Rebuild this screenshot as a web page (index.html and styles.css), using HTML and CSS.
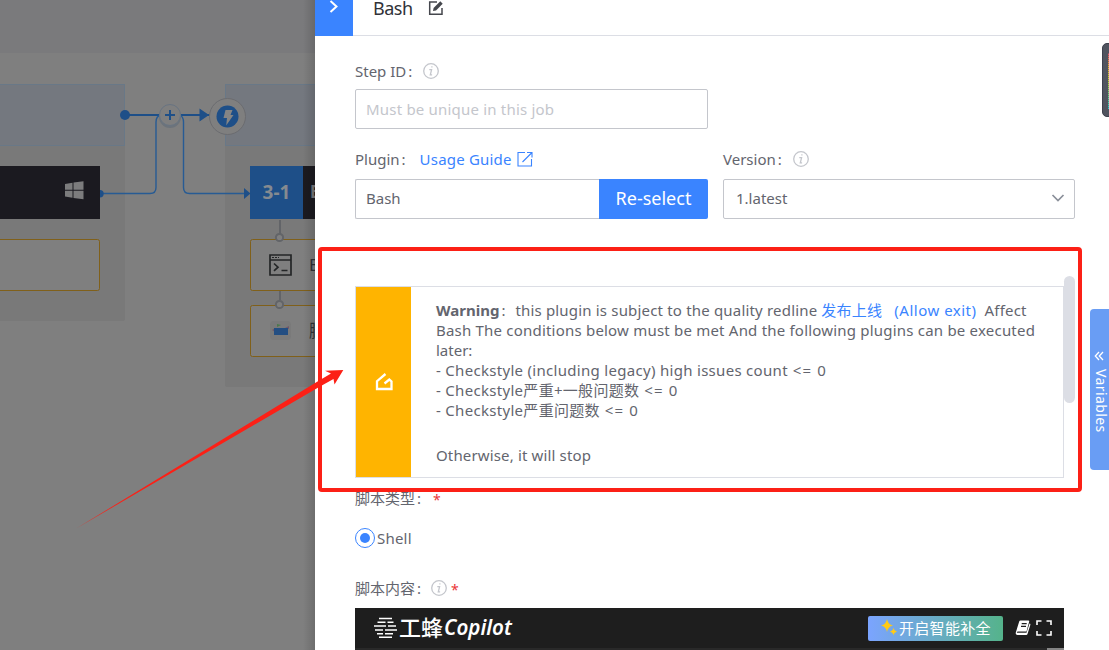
FILE: index.html
```html
<!DOCTYPE html>
<html lang="en">
<head>
<meta charset="utf-8">
<title>Bash</title>
<link rel="stylesheet" href="styles.css">
</head>
<body>
<div class="app">
  <div class="canvas">
    <div class="canvas-top"></div>
    <svg class="graph" width="315" height="650" viewBox="0 0 315 650">
      <rect class="stage" x="-10" y="84" width="135" height="237" rx="2"/>
      <rect class="stage" x="225" y="84" width="120" height="303" rx="2"/>
      <rect class="stage-head" x="-10" y="84.5" width="134.5" height="61"/>
      <rect class="stage-head" x="225.500" y="84.500" width="120" height="61"/>
      <rect class="job" x="0" y="166" width="100" height="53"/>
      <rect class="job" x="303" y="166" width="30" height="53"/>
      <rect class="job-no" x="250" y="166" width="53" height="53"/>
      <rect class="task" x="-10" y="239.500" width="109.500" height="51" rx="2"/>
      <rect class="task" x="250.500" y="239.500" width="90" height="51" rx="2"/>
      <rect class="task" x="250.500" y="305.500" width="90" height="51" rx="2"/>
      <g class="joint">
        <path d="M280 220v14M280 291v9"/>
        <circle cx="279.500" cy="237.500" r="3.600"/>
        <circle cx="279.500" cy="304.500" r="3.600"/>
      </g>
      <path class="wire wide" d="M125 115H160M181 115H211"/>
      <path class="wire" d="M102 193.500H150Q156 193.500 156 187.500V122Q156 116 161 115M180 115Q183.500 117 183.500 122V187.500Q183.500 193.500 189.500 193.500H245"/>
      <g class="blue">
        <circle cx="125" cy="115" r="5"/>
        <path d="M100 190a3.700 3.700 0 0 1 0 7.400zM199.500 108.500L209 115L199.500 121.500zM244 188l6.500 5.500l-6.500 5.500z"/>
      </g>
      <circle class="add-shadow" cx="170" cy="117" r="11"/>
      <circle class="add" cx="170" cy="115" r="10.500"/>
      <path class="plus" d="M165 115h10M170 110v10"/>
      <circle class="trigger" cx="227.500" cy="116.500" r="18"/>
      <circle class="blue" cx="227.500" cy="116.500" r="11"/>
      <path class="bolt" d="M225.500 110h7l-2 5h3l-7.300 10.500l.8-7.500h-3.500z"/>
      <path class="windows" d="M65 184l7.500-1.200v7H65zM73.500 182.600l10-1.400v8.600h-10zM65 190.800h7.500v7L65 196.600zM73.500 190.800h10v8.400l-10-1.300z"/>
      <g class="terminal">
        <path d="M270 255h21v20h-21zM270 260h21"/>
        <path d="M274 263.500l4 3.700l-4 3.700M281.500 270.500h6"/>
        <path class="dots" d="M272 257.500h7"/>
      </g>
      <rect class="plug-bg" x="270" y="321" width="21" height="19" rx="4"/>
      <path class="plug-ear" d="M272 330l3-2v4zM285 328l4-2v3z"/>
      <path class="plug-top" d="M277 324l4 1l-4 2z"/>
      <rect class="plug" x="274" y="328" width="14" height="7"/>
    </svg>
    <div class="num">3-1</div>
    <div class="peek peek-job">B</div>
    <div class="peek peek-one">B</div>
    <div class="peek peek-two">脚</div>
  </div>

  <main class="drawer">
    <header class="head">
      <div class="close"><svg width="38" height="36" viewBox="0 0 38 36"><path d="M15.500 1l6 5.500l-6 5.500"/></svg></div>
      <h1>Bash</h1>
      <svg class="edit" width="16" height="16" viewBox="0 0 16 16"><path d="M9 2H1.700V14.300H14V8"/><path class="pen" d="M5 11l.6-3L12.300 1.300l2.400 2.400L8 10.400z"/></svg>
    </header>
    <div class="form">
      <div class="label step"><span>Step ID</span><i class="colon">:</i><svg class="info"><use href="#info"/></svg></div>
      <div class="input id"><span>Must be unique in this job</span></div>
      <div class="cols">
        <section class="plugin">
          <div class="label"><span>Plugin</span><i class="colon">:</i><a class="guide">Usage Guide</a><svg class="ext" width="16" height="16" viewBox="0 0 16 16"><path d="M8 1.500H1V15H14.500V8M10 1.500h5v5M15 1.500L5.500 11"/></svg></div>
          <div class="join"><div class="input">Bash</div><button class="reselect">Re-select</button></div>
        </section>
        <section class="version">
          <div class="label"><span>Version</span><i class="colon">:</i><svg class="info"><use href="#info"/></svg></div>
          <div class="input select"><span>1.latest</span><svg width="14" height="10" viewBox="0 0 14 10"><path d="M1.500 2l5.500 5.500L12.500 2"/></svg></div>
        </section>
      </div>
      <div class="scroll">
        <div class="notice">
          <div class="badge"><svg width="20" height="20" viewBox="0 0 20 20"><path d="M11.500 2L3 9.200V17H17.500V9.500L15.300 7.500L10.500 11.500"/></svg></div>
          <div class="copy">
            <p class="l1"><b>Warning</b><span class="wide-colon">:</span><span class="l1-a">this plugin is subject to the quality redline</span><a class="rule">发布上线</a><a class="allow">(Allow exit)</a><span class="affect">Affect</span></p>
            <p class="l2">Bash The conditions below must be met And the following plugins can be executed</p>
            <p>later:</p>
            <p class="check">- Checkstyle (including legacy) high issues count<span class="limit"> &lt;= 0</span></p>
            <p class="check">- Checkstyle严重+一般问题数<span class="limit"> &lt;= 0</span></p>
            <p class="check">- Checkstyle严重问题数<span class="limit"> &lt;= 0</span></p>
            <p class="stop">Otherwise, it will stop</p>
          </div>
        </div>
        <div class="thumb"></div>
      </div>
      <div class="label type">脚本类型<i class="colon">:</i><em>*</em></div>
      <div class="radio"><span class="ring"></span><span class="shell">Shell</span></div>
      <div class="label content">脚本内容<i class="colon">:</i><svg class="info"><use href="#info"/></svg><em>*</em></div>
      <div class="editor">
        <div class="bar">
          <svg class="bee" width="23" height="22" viewBox="0 0 23 22"><path d="M5 1.500h13M3.500 5.300h8M13.500 5.300h6M0 9.100h12M14 9.100h8M1 12.900h8M11 12.900h12M3 16.700h6M11 16.700h8M5 20.300h13"/></svg>
          <span class="brand-cn">工蜂</span><span class="brand-en">Copilot</span>
          <div class="smart"><svg width="17" height="18" viewBox="0 0 17 18"><path d="M6 0Q7 5.500 12 6.500Q7 7.500 6 13Q5 7.500 0 6.500Q5 5.500 6 0zM12.500 9Q13 12 16 12.700Q13 13.300 12.500 16.500Q12 13.300 9 12.700Q12 12 12.500 9z"/></svg><span>开启智能补全</span></div>
          <svg class="book" width="17" height="18" viewBox="0 0 17 18"><path class="cover" d="M5.500 1.500h8q1 0 .7 1L11.500 12.500H3q-1.500 0-1 1.200h9.500L14.500 4.500q1.200.3.800 1.500L12.500 15q-.3 1-1.300 1H2.500q-2.300-.3-1.700-2.500L4.200 2.500q.3-1 1.300-1z"/><path class="lines" d="M6.700 4.700h5M6 7.300h5"/></svg>
          <svg class="full" width="16" height="16" viewBox="0 0 16 16"><path d="M1 5V1h4.500M10.500 1H15v4M15 11v4h-4.500M5.500 15H1v-4"/></svg>
        </div>
        <div class="code"><span></span></div>
      </div>
    </div>
  </main>

  <div class="variables"><svg width="10" height="10" viewBox="0 0 10 10"><path d="M5 1L1.300 5L5 9M9 1L5.300 5L9 9"/></svg><span>Variables</span></div>
  <div class="meter"><span></span></div>
  <svg class="markup" width="1109" height="650" viewBox="0 0 1109 650">
    <rect x="320" y="249" width="760" height="241" rx="2"/>
    <path d="M77 528L320 380L331 373.500L325 370.700L343.300 370L334.500 384.500L333.500 379L320 386.500z"/>
  </svg>
</div>
<svg class="defs"><symbol id="info" viewBox="0 0 16 16"><circle cx="8" cy="8" r="7.300"/><path d="M6.300 6.700h2.300L7.300 11.800h1.800"/><path class="dot" d="M8.300 3.800h1.200"/></symbol></svg>
</body>
</html>
```
FILE: styles.css
```css
* { box-sizing: border-box; }
body { margin: 0; font: 15px/20px "Noto Sans", "Noto Sans CJK SC", sans-serif; color: #63656e; }
svg { display: block; flex: none; fill: none; }
p, h1 { margin: 0; }
.defs { position: absolute; width: 0; height: 0; }
.app { position: relative; width: 1109px; height: 650px; overflow: hidden; background: #fff; }

.canvas { position: absolute; inset: 0 auto 0 0; width: 315px; background: #7f7f7f; overflow: hidden; }
.canvas::after { content: ""; position: absolute; inset: 0 0 0 auto; width: 12px; background: linear-gradient(90deg, transparent, rgba(0,0,0,.14)); }
.canvas-top { height: 53px; background: #7a7a7c; }
.graph { position: absolute; left: 0; top: 0; }
.stage { fill: #797979; }
.stage-head { fill: #74787f; stroke: #697887; }
.job { fill: #1b1a20; }
.job-no, .blue { fill: #1e4f88; }
.task { fill: #7f7f7f; stroke: #80601a; }
.joint { stroke: #626468; stroke-width: 2; }
.joint circle { fill: #7f7f7f; }
.wire { stroke: #275b94; stroke-width: 1.400; }
.wide { stroke: #1e4f88; stroke-width: 2; }
.add { fill: #7f7f7f; stroke: #687482; }
.add-shadow { fill: #6c737b; }
.plus { stroke: #1e4f88; stroke-width: 2; }
.trigger { fill: #7f7f7f; stroke: #6b6c70; }
.bolt { fill: #858585; }
.windows { fill: #7c7c7d; }
.terminal { stroke: #242627; stroke-width: 1.700; }
.terminal .dots { stroke-dasharray: 2 1; stroke-width: 1; }
.plug-bg { fill: #7a7a7a; }
.plug { fill: #234e82; }
.plug-ear { fill: #70586a; }
.plug-top { fill: #4c794c; }
.num { position: absolute; left: 250px; top: 166px; width: 53px; text-align: center; font: bold 19px/53px "Noto Sans", sans-serif; color: #858a90; }
.peek { position: absolute; left: 309px; font-size: 17px; line-height: 24px; color: #303238; }
.peek-job { left: 310px; top: 180px; font-weight: bold; color: #77777a; }
.peek-one { top: 253px; }
.peek-two { top: 319px; }

.drawer { position: absolute; left: 315px; top: 0; right: 0; bottom: 0; background: #fff; }
.head { display: flex; height: 36px; border-bottom: 1px solid #dcdee5; }
.close { width: 38px; height: 36px; background: #3a84ff; }
.close path { stroke: #fff; stroke-width: 2; }
.head h1 { width: 55px; margin: -4px 0 0 20px; font: 18px/24px "Noto Sans", sans-serif; letter-spacing: -.5px; color: #313238; }
.edit { stroke: #45474d; stroke-width: 1.500; }
.edit .pen { fill: #45474d; stroke: none; }
.form { padding: 0 34px 0 40px; }
.label { display: flex; align-items: center; height: 20px; }
.colon { width: 15px; padding-left: 2px; font-style: normal; }
.step { margin-top: 25px; }
.info { width: 16px; height: 16px; margin-left: 2px; stroke: #c4c6cc; stroke-width: 1.300; }
.input { display: flex; align-items: center; height: 40px; padding: 0 10px 2px; border: 1px solid #c4c6cc; border-radius: 2px; }
.id { width: 353px; margin-top: 8px; padding-bottom: 0; letter-spacing: .2px; color: #c4c6cc; }
.cols { display: grid; grid-template-columns: 353px 352px; gap: 15px; margin-top: 20px; }
.join, .version .input { margin-top: 10px; }
.join { display: flex; }
.join .input { width: 244px; border-right: 0; border-radius: 2px 0 0 2px; }
.reselect { flex: 1; height: 40px; padding: 0 0 2px; border: 0; border-radius: 0 2px 2px 0; background: #3a84ff; color: #fff; font: 18px/38px "Noto Sans", sans-serif; }
a { color: #3a84ff; }
.guide { margin-left: 5px; letter-spacing: .2px; }
.ext { margin-left: 5px; stroke: #3a84ff; stroke-width: 1.100; }
.select { justify-content: space-between; padding: 0 9px 2px 12px; }
.select path { stroke: #8a8f99; stroke-width: 1.700; }
.scroll { display: flex; align-items: flex-start; height: 202px; margin-top: 57px; }
.notice { display: flex; width: 709px; height: 192px; margin-top: 10px; border: 1px solid #dcdee5; }
.badge { display: grid; place-items: center; width: 55px; background: #ffb400; }
.badge path { stroke: #fff; stroke-width: 2.300; }
.copy { padding: 13px 0 0 25px; white-space: nowrap; }
.copy p { height: 20px; }
.l1 { display: flex; }
.wide-colon { width: 15px; padding-left: 2px; margin-right: 1px; }
.l1-a { letter-spacing: .18px; }
.rule { margin-left: 4px; letter-spacing: .25px; }
.allow { margin: 0 8px 0 12px; letter-spacing: .5px; }
.affect { letter-spacing: .2px; }
.l2 { letter-spacing: .205px; }
.check { letter-spacing: .3px; }
.limit { letter-spacing: 1.1px; }
.copy .stop { margin-top: 25px; letter-spacing: .15px; }
.thumb { width: 11px; height: 127px; border-radius: 6px; background: #dcdee5; }
.type { margin-top: 10px; }
em { margin-left: 3px; font-style: normal; font-size: 14px; line-height: 22px; color: #ea3636; padding-top: 3px; }
.radio { display: flex; align-items: center; height: 20px; margin-top: 20px; }
.ring { display: grid; place-items: center; width: 20px; height: 20px; margin-right: 2px; border: 1px solid #3a84ff; border-radius: 50%; }
.ring::after { content: ""; width: 10px; height: 10px; border-radius: 50%; background: #3a84ff; }
.shell { letter-spacing: .2px; }
.content { margin-top: 30px; }
.content .info { margin-left: 1px; }
.content em { margin-left: 4px; }
.editor { width: 709px; height: 42px; margin-top: 10px; background: #1e1e1e; }
.bar { display: flex; align-items: center; height: 40px; padding-left: 19px; color: #fff; }
.bee { stroke: #fff; stroke-width: 1.500; }
.brand-cn { width: 45px; margin: -5px 0 0 2px; font: 500 22px/32px "Noto Sans CJK SC", sans-serif; }
.brand-en { margin-top: -3px; font: italic 600 21px/30px "Noto Sans", sans-serif; transform: scaleX(.98); transform-origin: left; }
.smart { display: flex; align-items: center; width: 135px; height: 25px; margin-left: auto; padding-left: 13px; border-radius: 2px; background: linear-gradient(90deg, #7ba4ff, #55b38b); }
.smart path { fill: #ffca16; }
.smart span { margin-left: 1px; line-height: 24px; letter-spacing: .3px; }
.book { margin-left: 12px; }
.cover { fill: #fff; }
.lines { stroke: #1e1e1e; stroke-width: 1.200; }
.full { margin: 0 12px 0 4px; stroke: #fff; stroke-width: 1.600; }
.code { height: 2px; padding-left: 692px; background: #292929; }
.code span { display: block; width: 17px; height: 2px; background: #858585; }

.variables { position: absolute; left: 1090px; top: 309px; width: 19px; height: 161px; padding: 42px 0 0 4px; border-radius: 4px 0 0 4px; background: #699df4; color: #fff; overflow: hidden; }
.variables path { stroke: #fff; stroke-width: 1.300; }
.variables span { display: block; width: 15px; margin-top: 8px; writing-mode: vertical-rl; line-height: 15px; font-size: 14px; letter-spacing: .4px; }
.meter { position: absolute; left: 1102px; top: 43px; width: 12px; height: 74px; padding: 9px 0 0 5px; border: 1px solid #3d404c; border-radius: 5px; background: #50545f; }
.meter span { display: block; height: 56px; background: repeating-linear-gradient(rgba(80,84,95,.6) 0 1px, transparent 1px 2px), linear-gradient(#f0506e, #f3b33d 25%, #c5d93e 50%, #2bd0d0); }
.markup { position: absolute; left: 0; top: 0; pointer-events: none; }
.markup rect { stroke: #fc2016; stroke-width: 4; }
.markup path { fill: #fc2016; }
.info .dot { stroke-width: 1.500; }
```
